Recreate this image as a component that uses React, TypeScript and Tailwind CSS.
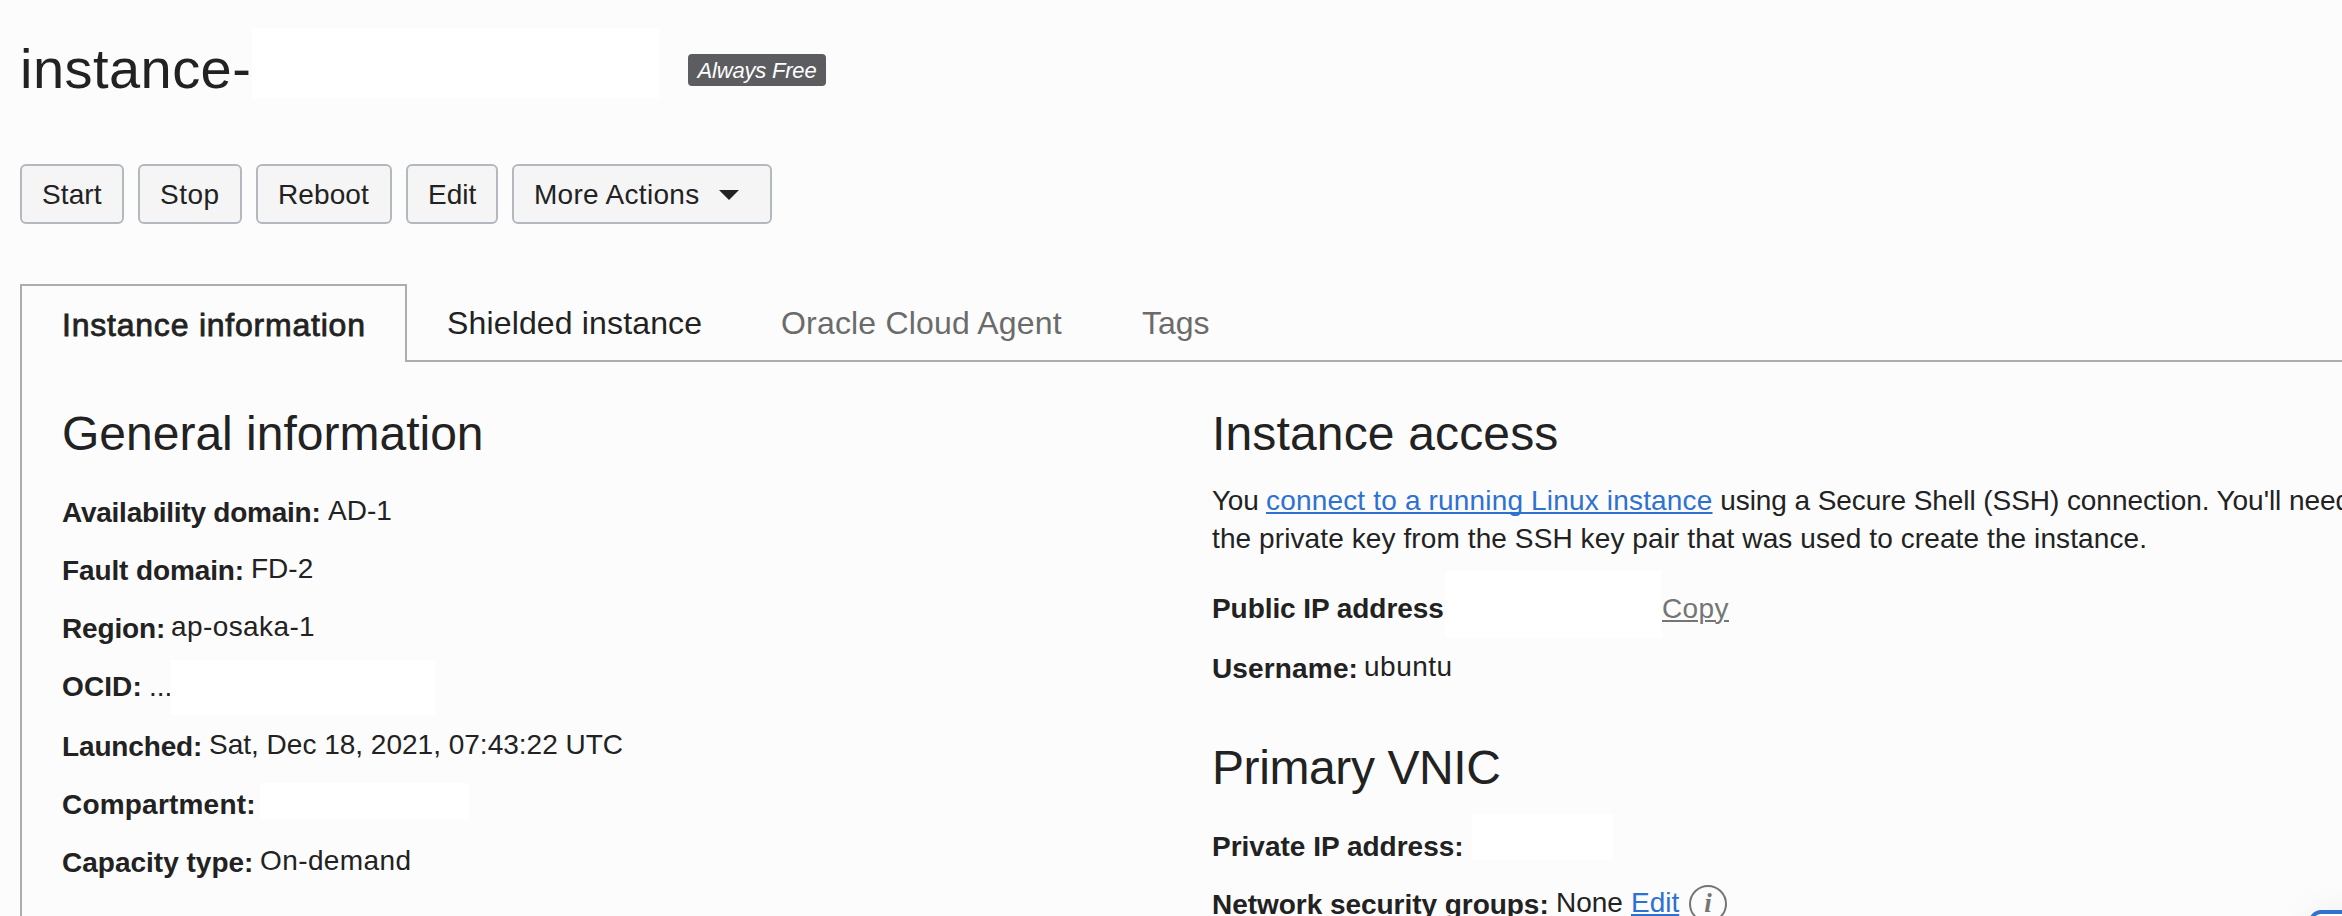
import React from "react";

type Field = {
  label: string;
  labelClass: string;
  rowClass?: string;
  children?: React.ReactNode;
};

function Row({ label, labelClass, rowClass = "h-[58px]", children }: Field) {
  return (
    <div className={`flex items-start ${rowClass}`}>
      <span className={`shrink-0 font-bold leading-[60px] ${labelClass}`}>{label}</span>
      {children}
    </div>
  );
}

function Value({ className = "", children }: { className?: string; children: React.ReactNode }) {
  return <span className={`leading-[56px] ${className}`}>{children}</span>;
}

function ActionButton({ className, children }: { className: string; children: React.ReactNode }) {
  return (
    <button
      className={`flex h-[60px] items-center rounded-[6px] border-2 border-[#b4b8bf] bg-[#f5f5f5] pl-5 pt-[2px] text-left ${className}`}
    >
      {children}
    </button>
  );
}

export default function App() {
  return (
    <div className="relative flex h-[916px] w-[2342px] flex-col overflow-hidden whitespace-nowrap bg-[#fcfcfc] font-['Liberation_Sans',Arial,sans-serif] text-[28px] text-[#222222]">
      <header className="flex h-[136px] shrink-0 items-start pl-5">
        <h1 className="mt-[35px] w-[232px] text-[56px] leading-[68px] tracking-[0.45px]">instance-</h1>
        <div className="mt-7 h-[70px] w-[407px] bg-white" />
        <span className="ml-[29px] mt-[54px] flex h-8 w-[138px] items-center justify-center rounded bg-[#5c5d60] text-[22px] italic tracking-[-0.2px] text-white">
          Always Free
        </span>
      </header>

      <div className="mt-7 flex shrink-0 gap-[14px] pl-5">
        <ActionButton className="w-[104px] tracking-[0.1px]">Start</ActionButton>
        <ActionButton className="w-[104px] tracking-[0.5px]">Stop</ActionButton>
        <ActionButton className="w-[136px] tracking-[0.1px]">Reboot</ActionButton>
        <ActionButton className="w-[92px]">Edit</ActionButton>
        <ActionButton className="w-[260px] tracking-[0.3px]">
          More Actions
          <svg className="ml-[20px]" width="20" height="10" viewBox="0 0 20 10">
            <path d="M0 0H20L10 10Z" fill="#222222" />
          </svg>
        </ActionButton>
      </div>

      <nav className="mt-[60px] flex h-[78px] shrink-0 pl-5 text-[32px]">
        <div className="w-[387px] border-l-2 border-r-2 border-t-2 border-[#adadad] pl-10 leading-[78px] tracking-[0.78px] [-webkit-text-stroke:0.8px_#222222]">
          Instance information
        </div>
        <div className="flex grow border-b-2 border-[#adadad] pl-10 leading-[79px]">
          <span className="w-[334px] tracking-[0.15px]">Shielded instance</span>
          <span className="w-[361px] tracking-[0.18px] text-[#6b6b6b]">Oracle Cloud Agent</span>
          <span className="text-[#6b6b6b]">Tags</span>
        </div>
      </nav>

      <main className="ml-5 flex grow border-l-2 border-[#adadad] pl-10">
        <section className="w-[1150px] shrink-0 pt-[42px]">
          <h2 className="mb-[19px] h-[60px] text-[48px] leading-[60px]">General information</h2>
          <Row label="Availability domain:" labelClass="w-[266px] tracking-[-0.25px]">
            <Value>AD-1</Value>
          </Row>
          <Row label="Fault domain:" labelClass="w-[189px] tracking-[-0.12px]">
            <Value>FD-2</Value>
          </Row>
          <Row label="Region:" labelClass="w-[109px] tracking-[-0.15px]">
            <Value className="tracking-[0.4px]">ap-osaka-1</Value>
          </Row>
          <Row label="OCID:" labelClass="w-[87px] tracking-[0.1px]" rowClass="h-[60px]">
            <span className="w-[21px] leading-[60px]">...</span>
            <div className="mt-[3px] h-[55px] w-[265px] bg-white" />
          </Row>
          <Row label="Launched:" labelClass="w-[147px] tracking-[-0.15px]">
            <Value>Sat, Dec 18, 2021, 07:43:22 UTC</Value>
          </Row>
          <Row label="Compartment:" labelClass="w-[198px] tracking-[0.2px]">
            <div className="mt-2 h-9 w-[209px] bg-white" />
          </Row>
          <Row label="Capacity type:" labelClass="w-[198px]">
            <Value className="tracking-[0.4px]">On-demand</Value>
          </Row>
        </section>

        <section className="shrink-0 pt-[42px]">
          <h2 className="mb-[18px] h-[60px] text-[48px] leading-[60px] tracking-[0.15px]">Instance access</h2>
          <p className="mb-[21px] leading-[38px]">
            <span className="tracking-[-0.25px]">You </span>
            <a className="text-[#2d71d2] underline decoration-2 underline-offset-2 tracking-[0.17px] [text-decoration-skip-ink:none]">
              connect to a running Linux instance
            </a>
            <span className="tracking-[-0.07px]"> using a Secure Shell (SSH) connection. You'll need</span>
            <br />
            <span className="tracking-[0.1px]">
              the private key from the SSH key pair that was used to create the instance.
            </span>
          </p>
          <Row label="Public IP address" labelClass="w-[233px] tracking-[-0.07px]" rowClass="h-[60px]">
            <div className="-mt-2 h-[67px] w-[217px] bg-white" />
            <a className="leading-[60px] tracking-[0.4px] text-[#757575] underline decoration-2 underline-offset-2">
              Copy
            </a>
          </Row>
          <Row label="Username:" labelClass="w-[152px] tracking-[0.15px]">
            <Value className="tracking-[0.5px]">ubuntu</Value>
          </Row>
          <h2 className="mb-[19px] mt-[41px] h-[60px] text-[48px] leading-[60px] tracking-[-0.4px]">Primary VNIC</h2>
          <Row label="Private IP address:" labelClass="w-[260px]">
            <div className="-mt-[3px] h-[46px] w-[141px] bg-white" />
          </Row>
          <Row label="Network security groups:" labelClass="w-[344px] tracking-[-0.04px]">
            <Value className="w-[75px]">None</Value>
            <a className="leading-[56px] text-[#2d71d2] underline decoration-2 underline-offset-2">Edit</a>
            <svg className="ml-[10px] mt-[10px]" width="38" height="38" viewBox="0 0 38 38">
              <circle cx="19" cy="19" r="18" fill="none" stroke="#757575" strokeWidth="2" />
              <text
                x="19"
                y="27"
                textAnchor="middle"
                fontFamily="Liberation Serif, serif"
                fontStyle="italic"
                fontWeight="bold"
                fontSize="27"
                fill="#757575"
              >
                i
              </text>
            </svg>
          </Row>
        </section>
      </main>

      <div className="absolute left-[2309px] top-[910px] h-20 w-20 rounded-xl border-4 border-[#2f72cf] bg-white shadow-[0_0_32px_rgba(0,0,0,0.06)]" />
    </div>
  );
}
